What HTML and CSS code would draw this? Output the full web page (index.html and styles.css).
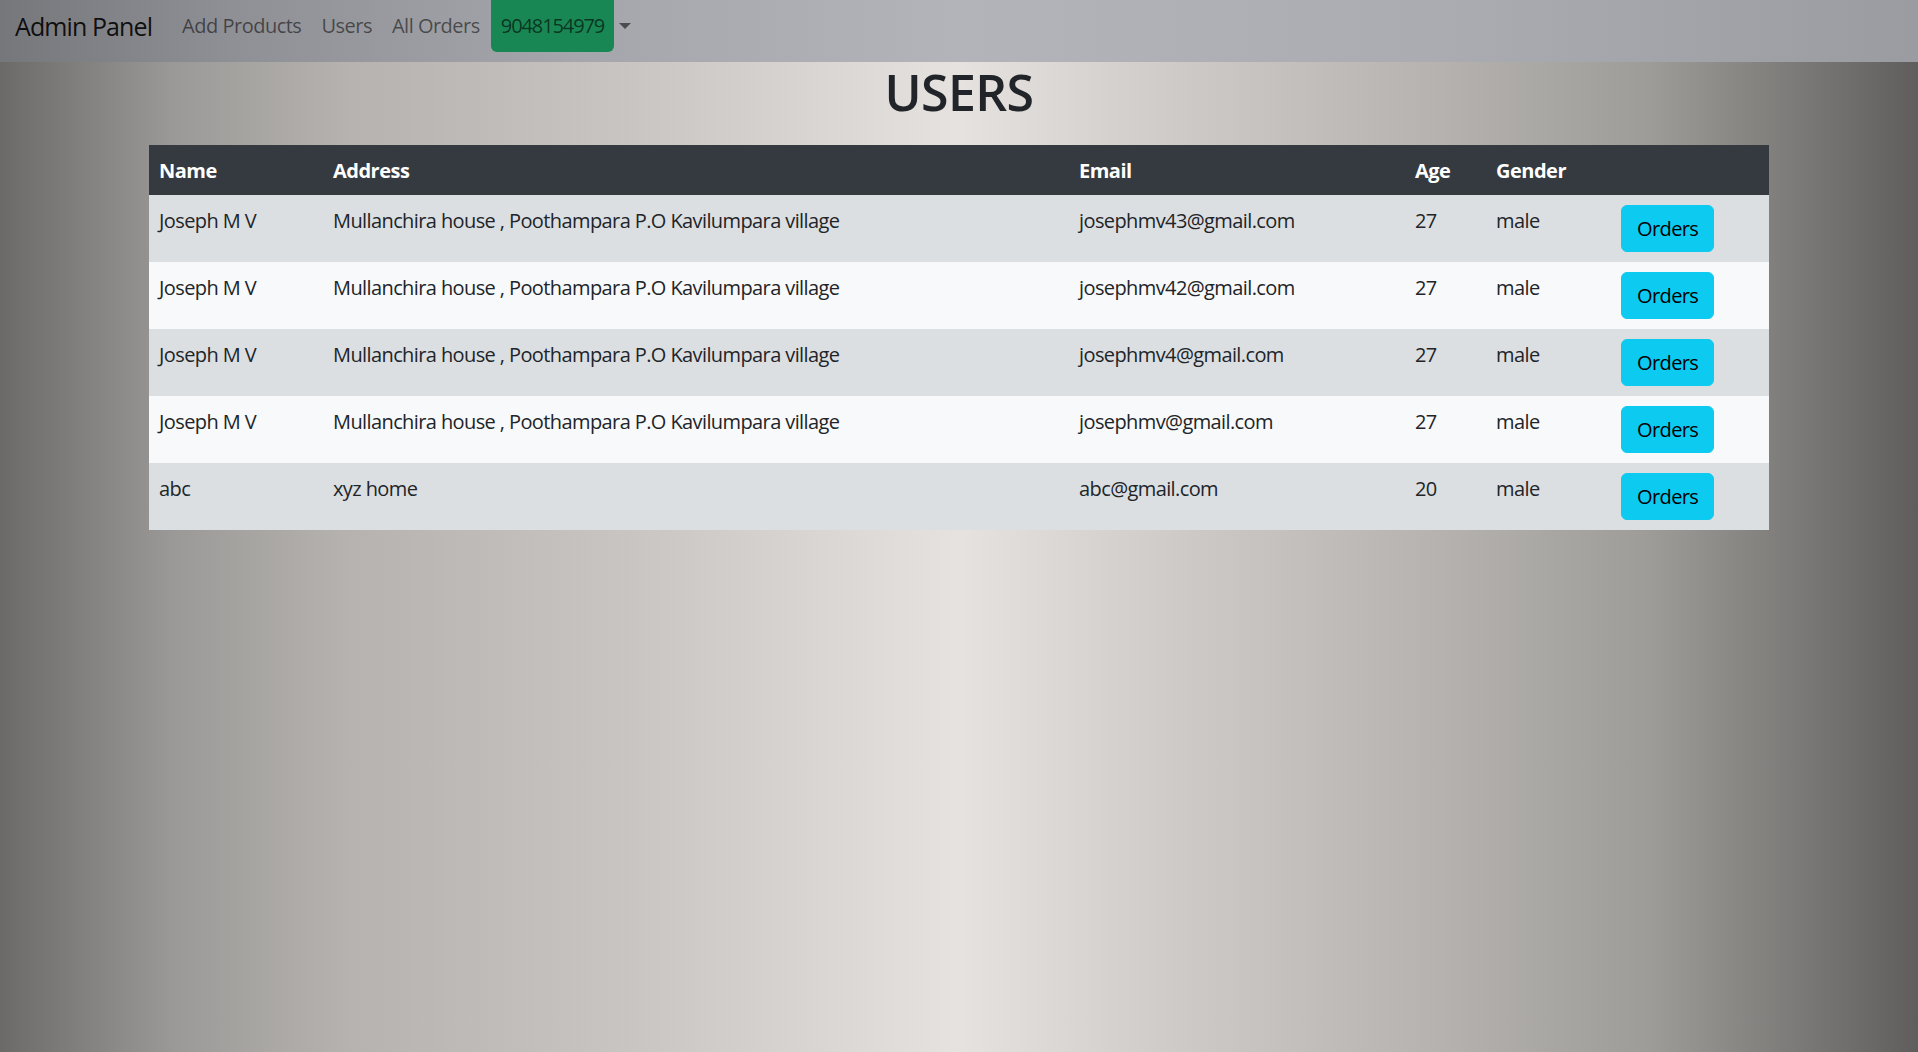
FILE: index.html
```html
<!DOCTYPE html>
<html lang="en">
<head>
<meta charset="utf-8">
<title>Admin Panel - Users</title>
<link rel="stylesheet" href="styles.css">
</head>
<body>
<nav class="navbar">
  <a class="brand" href="#">Admin Panel</a>
  <a class="nav-link" href="#">Add Products</a>
  <a class="nav-link" href="#">Users</a>
  <a class="nav-link" href="#">All Orders</a>
  <a class="nav-user" href="#">9048154979</a>
  <span class="caret"></span>
</nav>
<main class="container">
  <h1 class="title">USERS</h1>
  <table class="users">
    <colgroup>
      <col class="c-name"><col class="c-addr"><col class="c-email"><col class="c-age"><col class="c-gender"><col class="c-act">
    </colgroup>
    <thead>
      <tr><th>Name</th><th>Address</th><th>Email</th><th>Age</th><th>Gender</th><th></th></tr>
    </thead>
    <tbody>
      <tr><td>Joseph M V</td><td>Mullanchira house , Poothampara P.O Kavilumpara village</td><td>josephmv43@gmail.com</td><td>27</td><td>male</td><td class="act"><button class="btn-orders">Orders</button></td></tr>
      <tr><td>Joseph M V</td><td>Mullanchira house , Poothampara P.O Kavilumpara village</td><td>josephmv42@gmail.com</td><td>27</td><td>male</td><td class="act"><button class="btn-orders">Orders</button></td></tr>
      <tr><td>Joseph M V</td><td>Mullanchira house , Poothampara P.O Kavilumpara village</td><td>josephmv4@gmail.com</td><td>27</td><td>male</td><td class="act"><button class="btn-orders">Orders</button></td></tr>
      <tr><td>Joseph M V</td><td>Mullanchira house , Poothampara P.O Kavilumpara village</td><td>josephmv@gmail.com</td><td>27</td><td>male</td><td class="act"><button class="btn-orders">Orders</button></td></tr>
      <tr><td>abc</td><td>xyz home</td><td>abc@gmail.com</td><td>20</td><td>male</td><td class="act"><button class="btn-orders">Orders</button></td></tr>
    </tbody>
  </table>
</main>
</body>
</html>
```
FILE: styles.css
```css
html, body {
  margin: 0;
  padding: 0;
}
body {
  min-height: 100vh;
  font-family: "Open Sans", "Noto Sans", "Liberation Sans", sans-serif;
  font-size: 20px;
  color: #212529;
  background: linear-gradient(to right,
    #6b6a69 0%, #9b9997 9%, #b5b2af 18%, #c9c5c2 33%, #e6e2e0 50%,
    #cdc9c6 62%, #b5b2af 75%, #9e9c99 86%, #5f5e5c 100%);
  background-attachment: fixed;
}
.navbar {
  display: flex;
  align-items: flex-start;
  height: 62px;
  padding: 0 15px;
  box-sizing: border-box;
  background: linear-gradient(to right, #76777b 0%, #8f9095 12%, #a4a6ab 30%, #b2b4b9 50%, #aaacb1 75%, #9a9ca1 100%);
}
.navbar a {
  text-decoration: none;
}
.brand {
  font-size: 25px;
  line-height: 37px;
  margin-top: 8px;
  margin-right: 20px;
  color: rgba(0, 0, 0, 0.9);
  letter-spacing: -0.9px;
}
.nav-link {
  font-size: 20px;
  line-height: 30px;
  margin-top: 11px;
  padding: 0 10px;
  color: rgba(0, 0, 0, 0.55);
  letter-spacing: -0.5px;
}
.nav-user {
  margin-left: 1px;
  padding: 11px 10px;
  line-height: 30px;
  font-size: 20px;
  background: #198754;
  color: rgba(0, 0, 0, 0.62);
  border-radius: 0 0 6px 6px;
  letter-spacing: -1.1px;
}
.caret {
  margin-left: 5px;
  margin-top: 23px;
  width: 0;
  height: 0;
  border-left: 6px solid transparent;
  border-right: 6px solid transparent;
  border-top: 6px solid rgba(0, 0, 0, 0.55);
}
.container {
  width: 1620px;
  margin: 0 auto;
}
.title {
  margin: 0 0 23px;
  font-size: 50px;
  line-height: 60px;
  font-weight: 600;
  text-align: center;
  color: #212529;
  letter-spacing: -0.6px;
}
.users {
  width: 1620px;
  border-collapse: collapse;
  table-layout: fixed;
}
.c-name { width: 174px; }
.c-addr { width: 746px; }
.c-email { width: 336px; }
.c-age { width: 81px; }
.c-gender { width: 125px; }
.c-act { width: 158px; }
.users th, .users td {
  padding: 11px 10px 9px;
  line-height: 30px;
  text-align: left;
  vertical-align: top;
  letter-spacing: -0.6px;
}
.users td.act {
  padding: 10px;
}
.users thead th {
  background: #343a40;
  color: #fff;
  font-weight: 700;
  letter-spacing: -0.5px;
}
.users tbody tr:nth-child(odd) td {
  background: #dcdfe2;
}
.users tbody tr:nth-child(even) td {
  background: #f8f9fa;
}
.btn-orders {
  display: block;
  font-family: inherit;
  font-size: 20px;
  line-height: 30px;
  padding: 7.5px 15px;
  border: 1px solid #0dcaf0;
  border-radius: 6px;
  background: #0dcaf0;
  color: #000;
  cursor: pointer;
  letter-spacing: -0.6px;
}
```
